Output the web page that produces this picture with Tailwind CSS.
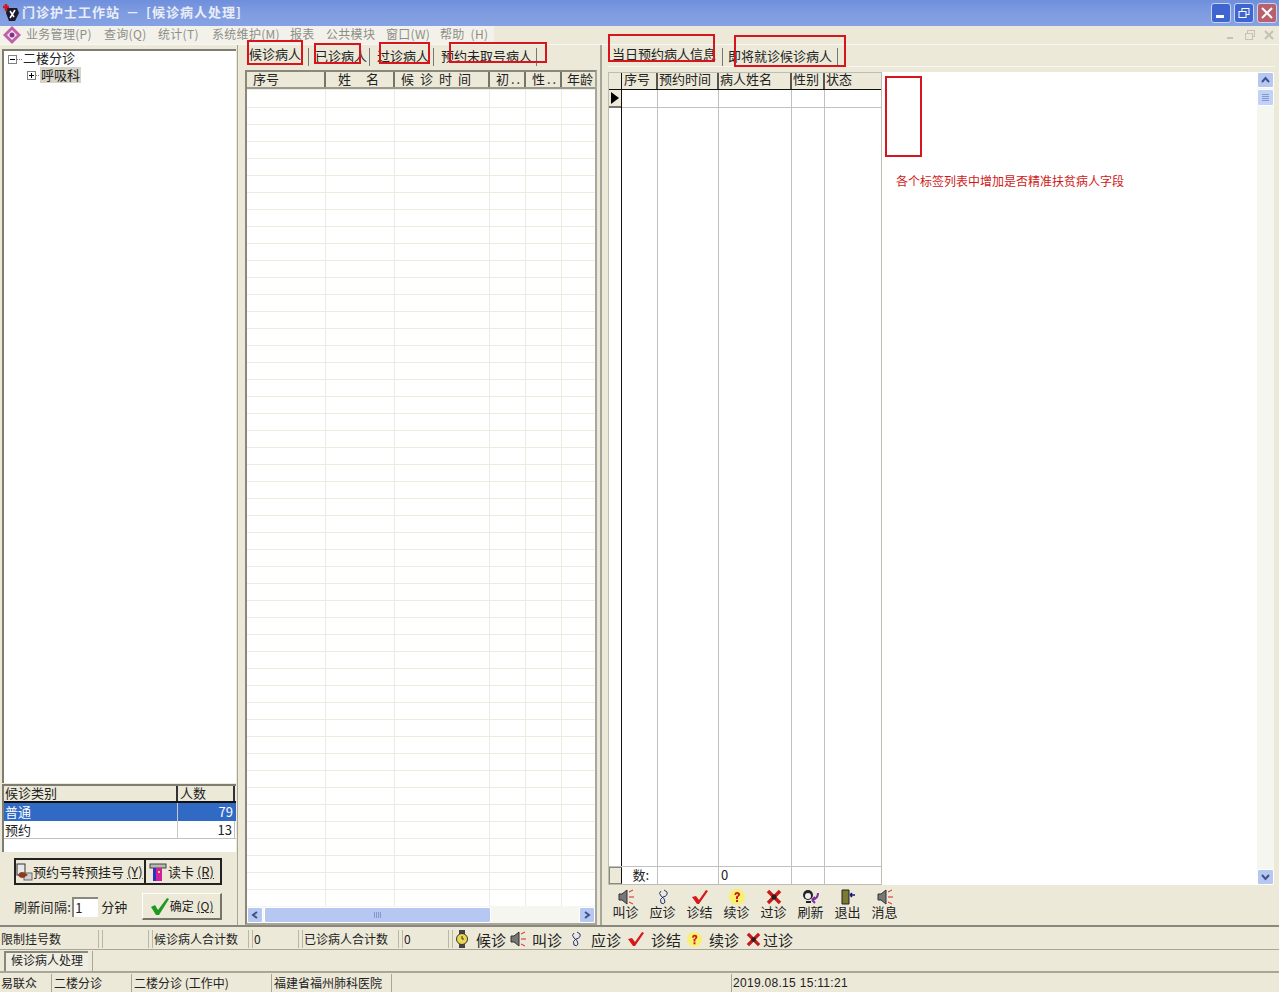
<!DOCTYPE html>
<html lang="zh-CN">
<head>
<meta charset="UTF-8">
<title>门诊护士工作站</title>
<script src="https://cdn.jsdelivr.net/npm/@tailwindcss/browser@4"></script>
</head>
<body class="relative w-[1279px] h-[992px] overflow-hidden bg-[#ece9d8] text-[13px] leading-[16px] text-[#222] font-['Noto_Sans_CJK_SC','Liberation_Sans',sans-serif]">

<!-- Title bar -->
<div class="h-[26px] flex items-center pl-[3px] pr-[2px] bg-gradient-to-b from-[#6f8fdc] via-[#7f9ce0] to-[#86a2e4]">
  <svg width="18" height="20" viewBox="0 0 18 20" class="shrink-0">
    <path d="M4 5 L14 5 L16 10 L12 18 L6 18 L3 10 Z" fill="#1a1a2a"/>
    <path d="M7 8 L11 14 M12 7 L7 15" stroke="#fff" stroke-width="1.5"/>
    <path d="M3 1 V8 M0 4 H6" stroke="#d01818" stroke-width="2.5"/>
  </svg>
  <span class="ml-[1px] -mt-[3px] font-bold text-[#e9edf8] tracking-[1px] whitespace-nowrap">门诊护士工作站</span>
  <span class="ml-[6px] -mt-[3px] font-bold text-[#e9edf8]">－</span>
  <span class="ml-[7px] -mt-[3px] font-bold text-[#e9edf8] tracking-[1px] whitespace-nowrap">[候诊病人处理]</span>
  <div class="ml-auto flex gap-[3px]">
    <div class="w-[20px] h-[20px] rounded-[3px] bg-[#3f66d0] border border-[#c8d4f0] flex items-end p-[4px]"><div class="w-[8px] h-[3px] bg-white"></div></div>
    <div class="w-[20px] h-[20px] rounded-[3px] bg-[#3f66d0] border border-[#c8d4f0] flex items-center justify-center">
      <svg width="12" height="12" viewBox="0 0 12 12" fill="none" stroke="#fff"><rect x="4" y="1.5" width="7" height="6"/><rect x="1" y="4.5" width="7" height="6" fill="#3f66d0"/></svg>
    </div>
    <div class="w-[20px] h-[20px] rounded-[3px] bg-[#b8606e] border border-[#d8d0e0] flex items-center justify-center">
      <svg width="12" height="12" viewBox="0 0 12 12" stroke="#fff" stroke-width="2"><path d="M1 1 L11 11 M11 1 L1 11"/></svg>
    </div>
  </div>
</div>

<!-- Menu bar -->
<div class="h-[19px] flex items-center bg-[#ece9d8] border-b border-[#f7f6f0]">
  <div class="w-[494px] h-[18px] flex items-center bg-[#f3f2ea] text-[12px] leading-[14px] text-[#8e8e88] tracking-[0.3px] whitespace-nowrap">
    <svg width="18" height="18" viewBox="0 0 18 18" class="ml-[3px] shrink-0">
      <path d="M9 0 L18 9 L9 18 L0 9 Z" fill="#c060a8"/>
      <path d="M9 4 L14 9 L9 14 L4 9 Z" fill="#f4e8f4"/>
      <circle cx="9" cy="9" r="2.5" fill="#883088"/>
    </svg>
    <span class="ml-[5px] w-[78px] -mt-[3px]">业务管理(P)</span>
    <span class="w-[54px] -mt-[3px]">查询(Q)</span>
    <span class="w-[54px] -mt-[3px]">统计(T)</span>
    <span class="w-[78px] -mt-[3px]">系统维护(M)</span>
    <span class="w-[36px] -mt-[3px]">报表</span>
    <span class="w-[60px] -mt-[3px]">公共模块</span>
    <span class="w-[54px] -mt-[3px]">窗口(W)</span>
    <span class="-mt-[3px]">帮助 &nbsp;(H)</span>
  </div>
  <div class="ml-auto mr-[4px] flex gap-[7px] text-[#c4c2b6]">
    <svg width="12" height="12" viewBox="0 0 12 12" stroke="currentColor" stroke-width="2"><path d="M2 9 H8"/></svg>
    <svg width="12" height="12" viewBox="0 0 12 12" fill="none" stroke="currentColor"><rect x="3.5" y="1.5" width="7" height="6"/><rect x="1.5" y="4.5" width="7" height="6" fill="#ece9d8"/></svg>
    <svg width="12" height="12" viewBox="0 0 12 12" stroke="currentColor" stroke-width="2"><path d="M2 2 L10 10 M10 2 L2 10"/></svg>
  </div>
</div>

<!-- Main area -->
<div class="h-[882px] flex border-b-2 border-[#8a887c]">

  <!-- Left: tree and category list -->
  <div class="w-[238px] shrink-0 pl-[2px] pr-[1px] pt-[4px] flex flex-col border-r border-[#a8a698]">
    <div class="h-[734px] bg-white border-t-2 border-l-2 border-[#7f7d72] relative">
      <div class="flex items-center h-[16px] pl-[4px]">
        <div class="w-[9px] h-[9px] border border-[#808080] flex items-center justify-center"><div class="w-[5px] h-[1px] bg-black"></div></div>
        <div class="w-[5px] border-t border-dotted border-[#808080]"></div>
        <span class="ml-[1px] -mt-[2px]">二楼分诊</span>
      </div>
      <div class="flex items-center h-[16px] pl-[23px]">
        <div class="relative w-[9px] h-[9px] border border-[#808080] flex items-center justify-center"><div class="w-[5px] h-[1px] bg-black"></div><div class="absolute w-[1px] h-[5px] bg-black"></div></div>
        <div class="w-[3px] border-t border-dotted border-[#808080]"></div>
        <span class="ml-[1px] px-[1px] bg-[#d6d3c6]">呼吸科</span>
      </div>
    </div>
    <div class="h-[68px] mt-[1px] bg-white border-t-2 border-l-2 border-[#7f7d72]">
      <div class="h-[17px] flex bg-[#ece9d8] border-b-2 border-[#111] leading-[14px]">
        <div class="w-[174px] pl-[1px] border-r-2 border-[#333]">候诊类别</div>
        <div class="w-[57px] pl-[2px] border-r-2 border-[#333]">人数</div>
      </div>
      <div class="h-[18px] flex bg-[#316ac5] text-white">
        <div class="w-[174px] pl-[1px] border-r border-[#c8c8c8] leading-[18px]">普通</div>
        <div class="w-[57px] pr-[2px] text-right leading-[18px]">79</div>
      </div>
      <div class="h-[18px] flex border-b border-[#c0c0c0]">
        <div class="w-[174px] pl-[1px] border-r border-[#c8c8c8] leading-[18px]">预约</div>
        <div class="w-[57px] pr-[2px] text-right leading-[18px] border-r border-[#c0c0c0]">13</div>
      </div>
    </div>
    <div class="flex pl-[12px] mt-[6px] h-[27px] leading-[14px]">
      <div class="w-[132px] h-[27px] border-2 border-[#222] bg-[#ece9d8] flex items-center text-[13px]">
        <svg width="17" height="18" viewBox="0 0 17 18" class="shrink-0">
          <rect x="1" y="1" width="8" height="11" fill="#e8e8e8" stroke="#333"/>
          <rect x="8" y="10" width="8" height="7" fill="#d0d0d0" stroke="#666"/>
          <path d="M2 12 Q4 7 9 10 L12 12 L7 15 Q3 15 2 12 Z" fill="#8a3a20"/>
        </svg>
        <span class="whitespace-nowrap">预约号转预挂号 <u>(Y)</u></span>
      </div>
      <div class="w-[76px] h-[27px] border-2 border-[#222] border-l-0 bg-[#ece9d8] flex items-center">
        <svg width="20" height="20" viewBox="0 0 20 20" class="ml-[3px] shrink-0">
          <rect x="1" y="2" width="16" height="4" fill="#b8b8b0" stroke="#444"/>
          <rect x="4" y="6" width="9" height="13" fill="#d020a0"/>
          <rect x="4" y="6" width="3" height="13" fill="#3030c0"/>
          <rect x="9" y="9" width="2" height="2" fill="#f0e040"/>
        </svg>
        <span class="-ml-[1px] whitespace-nowrap">读卡 <u>(R)</u></span>
      </div>
    </div>
    <div class="flex items-center pl-[12px] mt-[8px] h-[27px]">
      <span class="tracking-[0.3px] whitespace-nowrap">刷新间隔:</span>
      <div class="ml-[1px] w-[26px] h-[20px] bg-white border-t-2 border-l-2 border-[#8a887c] leading-[18px] pl-[1px]">1</div>
      <span class="ml-[3px] whitespace-nowrap">分钟</span>
      <div class="ml-[15px] w-[80px] h-[27px] bg-[#ece9d8] border border-[#fff] border-r-[#77756a] border-b-[#77756a] border-r-2 border-b-2 flex items-center justify-center">
        <svg width="20" height="20" viewBox="0 0 20 20"><path d="M1 11 L5 9 L8 14 L17 2 L19 3 L9 19 L6 19 Z" fill="#1f9a1f"/></svg>
        <span class="whitespace-nowrap text-[12px]">确定 <u>(Q)</u></span>
      </div>
    </div>
  </div>

  <!-- Splitter -->
  <div class="w-[7px] shrink-0"></div>

  <!-- Middle: waiting patient grid -->
  <div class="w-[355px] shrink-0 flex flex-col">
    <div class="h-[21px] flex items-end pl-[2px] text-[13px] whitespace-nowrap">
      <div class="h-[21px] w-[61px] pl-[2px] leading-[18px]">候诊病人</div>
      <div class="h-[18px] w-[62px] pl-[6px] leading-[16px] border-l border-r border-[#777]">已诊病人</div>
      <div class="h-[18px] w-[64px] pl-[7px] leading-[16px] border-r border-[#777]">过诊病人</div>
      <div class="h-[18px] w-[103px] pl-[7px] leading-[16px] border-r border-[#777]">预约未取号病人</div>
    </div>
    <div class="h-[855px] mt-[4px] mr-[3px] border-2 border-[#8a887c] border-r-[#a8a698] border-b-[#a8a698] bg-white flex flex-col">
      <div class="h-[17px] shrink-0 flex bg-[#ece9d8] border-b-2 border-[#9c9a8c] leading-[14px] whitespace-nowrap">
        <div class="w-[79px] pl-[6px] border-r-2 border-[#77756a]">序号</div>
        <div class="w-[69px] pl-[12px] border-r-2 border-[#77756a]">姓<span class="ml-[15px]">名</span></div>
        <div class="w-[95px] pl-[6px] border-r-2 border-[#77756a] tracking-[6px]">候诊时间</div>
        <div class="w-[36px] pl-[6px] border-r-2 border-[#77756a] tracking-[2px]">初..</div>
        <div class="w-[36px] pl-[6px] border-r-2 border-[#77756a] tracking-[2px]">性..</div>
        <div class="flex-1 pl-[5px]">年龄</div>
      </div>
      <div class="flex-1 flex bg-[repeating-linear-gradient(to_bottom,#fff_0,#fff_16px,#ecebdf_16px,#ecebdf_17px)] bg-[position:0_2px]">
        <div class="w-[79px] border-r border-[#ecebdf]"></div>
        <div class="w-[69px] border-r border-[#ecebdf]"></div>
        <div class="w-[95px] border-r border-[#ecebdf]"></div>
        <div class="w-[36px] border-r border-[#ecebdf]"></div>
        <div class="w-[36px] border-r border-[#ecebdf]"></div>
        <div class="flex-1"></div>
      </div>
      <!-- Horizontal scrollbar -->
      <div class="h-[17px] shrink-0 flex items-center bg-[#f6f6f0]">
        <div class="w-[16px] h-[16px] rounded-[2px] bg-[#b6c8f2] border border-white flex items-center justify-center">
          <svg width="8" height="8" viewBox="0 0 8 8" fill="none" stroke="#41528a" stroke-width="2"><path d="M6 1 L2 4 L6 7"/></svg>
        </div>
        <div class="w-[227px] h-[16px] ml-[1px] rounded-[2px] bg-[#b6c8f2] border border-white flex items-center justify-center gap-[1px]">
          <div class="w-[1px] h-[6px] bg-[#8398d0]"></div><div class="w-[1px] h-[6px] bg-[#8398d0]"></div><div class="w-[1px] h-[6px] bg-[#8398d0]"></div><div class="w-[1px] h-[6px] bg-[#8398d0]"></div>
        </div>
        <div class="ml-auto w-[16px] h-[16px] rounded-[2px] bg-[#b6c8f2] border border-white flex items-center justify-center">
          <svg width="8" height="8" viewBox="0 0 8 8" fill="none" stroke="#41528a" stroke-width="2"><path d="M2 1 L6 4 L2 7"/></svg>
        </div>
      </div>
    </div>
  </div>

  <!-- Splitter -->
  <div class="w-[8px] shrink-0 border-l-2 border-[#a8a698]"></div>

  <!-- Right: appointment grid and memo -->
  <div class="flex-1 flex flex-col">
    <div class="h-[21px] flex items-end text-[13px] whitespace-nowrap">
      <div class="h-[21px] w-[114px] pl-[4px] leading-[18px]">当日预约病人信息</div>
      <div class="h-[18px] w-[116px] pl-[5px] leading-[16px] border-l border-r border-[#777]">即将就诊候诊病人</div>
    </div>
    <div class="h-[820px] mr-[4px] pt-[5px] flex border-t border-[#f7f6f0]">
      <div class="w-[274px] h-[813px] flex flex-col border border-[#bdbdb4] bg-white">
        <div class="h-[17px] shrink-0 flex bg-[#ece9d8] border-b border-[#111] leading-[12px] whitespace-nowrap">
          <div class="w-[13px] border-r border-[#111]"></div>
          <div class="w-[36px] pl-[2px] border-r-2 border-[#555]">序号</div>
          <div class="w-[61px] pl-[1px] border-r-2 border-[#555]">预约时间</div>
          <div class="w-[73px] pl-[1px] border-r-2 border-[#555]">病人姓名</div>
          <div class="w-[33px] pl-[1px] border-r-2 border-[#555]">性别</div>
          <div class="flex-1 pl-[1px]">状态</div>
        </div>
        <div class="flex-1 flex">
          <div class="w-[13px] border-r border-[#111] flex flex-col">
            <div class="h-[18px] bg-[#ece9d8] border-b-2 border-[#77756a] flex items-center pl-[2px]">
              <svg width="8" height="12" viewBox="0 0 8 12"><path d="M0 0 L8 6 L0 12 Z" fill="#000"/></svg>
            </div>
          </div>
          <div class="w-[36px] border-r border-[#c0c0c0]"><div class="h-[18px] border-b border-[#c0c0c0]"></div></div>
          <div class="w-[61px] border-r border-[#c0c0c0]"><div class="h-[18px] border-b border-[#c0c0c0]"></div></div>
          <div class="w-[73px] border-r border-[#c0c0c0]"><div class="h-[18px] border-b border-[#c0c0c0]"></div></div>
          <div class="w-[33px] border-r border-[#c0c0c0]"><div class="h-[18px] border-b border-[#c0c0c0]"></div></div>
          <div class="flex-1"><div class="h-[18px] border-b border-[#c0c0c0]"></div></div>
        </div>
        <div class="h-[18px] flex border-t border-[#c0c0c0] leading-[15px]">
          <div class="w-[13px] bg-[#ece9d8] border border-[#8a887c] border-r-[#111]"></div>
          <div class="w-[36px] border-r border-[#c0c0c0] whitespace-nowrap flex justify-end pr-[8px]">数:</div>
          <div class="w-[61px] border-r border-[#c0c0c0]"></div>
          <div class="w-[73px] pl-[2px] border-r border-[#c0c0c0]">0</div>
          <div class="w-[33px] border-r border-[#c0c0c0]"></div>
        </div>
      </div>
      <div class="w-[392px] h-[813px] bg-white flex">
        <div class="flex-1 pl-[14px] pt-[101px] text-[12px] text-[#d01818] whitespace-nowrap">各个标签列表中增加是否精准扶贫病人字段</div>
        <div class="w-[17px] bg-[#f6f6f0] flex flex-col justify-between">
          <div>
            <div class="h-[16px] rounded-[2px] bg-[#b6c8f2] border border-white flex items-center justify-center">
              <svg width="9" height="8" viewBox="0 0 9 8" fill="none" stroke="#41528a" stroke-width="2"><path d="M1 6 L4.5 2 L8 6"/></svg>
            </div>
            <div class="h-[17px] mt-[1px] rounded-[2px] bg-[#c2d2f6] border border-white flex flex-col items-center justify-center gap-[1px]">
              <div class="w-[7px] h-[1px] bg-[#8398d0]"></div><div class="w-[7px] h-[1px] bg-[#8398d0]"></div><div class="w-[7px] h-[1px] bg-[#8398d0]"></div><div class="w-[7px] h-[1px] bg-[#8398d0]"></div>
            </div>
          </div>
          <div class="h-[16px] rounded-[2px] bg-[#b6c8f2] border border-white flex items-center justify-center">
            <svg width="9" height="8" viewBox="0 0 9 8" fill="none" stroke="#41528a" stroke-width="2"><path d="M1 2 L4.5 6 L8 2"/></svg>
          </div>
        </div>
      </div>
    </div>
    <!-- Action toolbar -->
    <div class="flex mt-[3px] -ml-[1px] text-[13px] leading-[14px] text-center whitespace-nowrap">
      <div class="w-[37px] flex flex-col items-center">
        <svg width="20" height="16" viewBox="0 0 20 16"><path d="M3 5 H6 L11 1 V15 L6 11 H3 Z" fill="#777" stroke="#333"/><path d="M13 3 L17 1 M13 8 H18 M13 13 L17 15" stroke="#e02020"/></svg>
        <span>叫诊</span>
      </div>
      <div class="w-[37px] flex flex-col items-center">
        <svg width="16" height="16" viewBox="0 0 16 16" fill="none" stroke="#223080"><path d="M9 1 L12 3 Q13 7 8 8 Q4 10 6 14 Q9 16 10 13 Q10 9 6 7 Q3 4 6 2"/></svg>
        <span>应诊</span>
      </div>
      <div class="w-[37px] flex flex-col items-center">
        <svg width="18" height="16" viewBox="0 0 18 16"><path d="M1 8 L5 7 L8 11 L15 1 L17 2 L8 15 L6 15 Z" fill="#d81818"/></svg>
        <span>诊结</span>
      </div>
      <div class="w-[37px] flex flex-col items-center">
        <svg width="16" height="16" viewBox="0 0 16 16"><circle cx="8" cy="8" r="8" fill="#f8f070"/><path d="M5.5 6 Q5.5 3 8 3 Q11 3 11 5.5 Q11 7 9 8 L9 10 H7 L7 7.5 Q9 7 9 5.5 Q9 4.7 8 4.7 Q7.2 4.7 7.2 6 Z M7 11 H9 V13 H7 Z" fill="#d01818"/></svg>
        <span>续诊</span>
      </div>
      <div class="w-[37px] flex flex-col items-center">
        <svg width="16" height="16" viewBox="0 0 16 16"><path d="M2 2 L14 14 M14 2 L2 14" stroke="#c81818" stroke-width="3.5"/><circle cx="8" cy="8" r="2.5" fill="#222"/></svg>
        <span>过诊</span>
      </div>
      <div class="w-[37px] flex flex-col items-center">
        <svg width="18" height="16" viewBox="0 0 18 16"><circle cx="6" cy="6" r="5" fill="#222"/><circle cx="6" cy="7" r="3" fill="#eee"/><path d="M4 13 H9" stroke="#222" stroke-width="2"/><path d="M16 4 Q16 10 10 11 M10 11 L13 8 M10 11 L13 14" fill="none" stroke="#8030a0" stroke-width="2"/></svg>
        <span>刷新</span>
      </div>
      <div class="w-[37px] flex flex-col items-center">
        <svg width="16" height="16" viewBox="0 0 16 16"><path d="M2 1 H9 V15 H2 Z" fill="#7a7a30" stroke="#222"/><path d="M10 6 H15 M10 6 L12 4 M10 6 L12 8" stroke="#101080" stroke-width="1.5"/></svg>
        <span>退出</span>
      </div>
      <div class="w-[37px] flex flex-col items-center">
        <svg width="20" height="16" viewBox="0 0 20 16"><path d="M3 5 H6 L11 1 V15 L6 11 H3 Z" fill="#777" stroke="#333"/><path d="M13 3 L17 1 M13 8 H18 M13 13 L17 15" stroke="#e02020"/></svg>
        <span>消息</span>
      </div>
    </div>
  </div>
</div>

<!-- Summary row -->
<div class="h-[23px] pt-[2px] flex items-center border-b border-[#a8a698] text-[12px] leading-[17px] whitespace-nowrap">
  <div class="w-[99px] h-[18px] mr-[3px] pl-[1px] border-r border-[#bab7a6]">限制挂号数</div>
  <div class="w-[47px] h-[18px] mr-[3px] border-x border-[#bab7a6]"></div>
  <div class="w-[97px] h-[18px] mr-[3px] pl-[1px] border-x border-[#bab7a6]">候诊病人合计数</div>
  <div class="w-[47px] h-[18px] mr-[3px] pl-[1px] border-x border-[#bab7a6]">0</div>
  <div class="w-[97px] h-[18px] mr-[3px] pl-[1px] border-x border-[#bab7a6]">已诊病人合计数</div>
  <div class="w-[47px] h-[18px] mr-[3px] pl-[1px] border-x border-[#bab7a6]">0</div>
  <div class="h-[18px] flex items-center border-l border-[#bab7a6] pl-[1px] text-[15px]">
    <svg width="16" height="18" viewBox="0 0 16 18"><rect x="5" y="0" width="6" height="18" fill="#444"/><circle cx="8" cy="9" r="5.5" fill="#e8d850" stroke="#333"/><path d="M8 6 V9 H10" stroke="#333" fill="none"/></svg>
    <span class="ml-[6px]">候诊</span>
    <svg width="20" height="16" viewBox="0 0 20 16" class="ml-[2px]"><path d="M3 5 H6 L11 1 V15 L6 11 H3 Z" fill="#777" stroke="#333"/><path d="M13 3 L17 1 M13 8 H18 M13 13 L17 15" stroke="#e02020"/></svg>
    <span class="ml-[4px]">叫诊</span>
    <svg width="16" height="16" viewBox="0 0 16 16" fill="none" stroke="#223080" class="ml-[6px]"><path d="M9 1 L12 3 Q13 7 8 8 Q4 10 6 14 Q9 16 10 13 Q10 9 6 7 Q3 4 6 2"/></svg>
    <span class="ml-[7px]">应诊</span>
    <svg width="18" height="16" viewBox="0 0 18 16" class="ml-[6px]"><path d="M1 8 L5 7 L8 11 L15 1 L17 2 L8 15 L6 15 Z" fill="#d81818"/></svg>
    <span class="ml-[6px]">诊结</span>
    <svg width="15" height="15" viewBox="0 0 16 16" class="ml-[6px]"><circle cx="8" cy="8" r="8" fill="#f8f070"/><path d="M5.5 6 Q5.5 3 8 3 Q11 3 11 5.5 Q11 7 9 8 L9 10 H7 L7 7.5 Q9 7 9 5.5 Q9 4.7 8 4.7 Q7.2 4.7 7.2 6 Z M7 11 H9 V13 H7 Z" fill="#d01818"/></svg>
    <span class="ml-[7px]">续诊</span>
    <svg width="15" height="15" viewBox="0 0 16 16" class="ml-[7px]"><path d="M2 2 L14 14 M14 2 L2 14" stroke="#c81818" stroke-width="3.5"/><circle cx="8" cy="8" r="2.5" fill="#222"/></svg>
    <span class="ml-[2px]">过诊</span>
  </div>
</div>

<!-- Window tab strip -->
<div class="h-[23px] flex items-center border-b-2 border-[#a8a698] pl-[4px]">
  <div class="w-[84px] h-[20px] pl-[5px] bg-[#f0eee3] border-t-2 border-l-2 border-[#8a887c] leading-[14px] text-[12px]">候诊病人处理</div>
  <div class="ml-[4px] h-[20px] border-l border-[#a8a698]"></div>
</div>

<!-- Status bar -->
<div class="h-[18px] mt-[1px] flex items-center text-[12px] leading-[18px] whitespace-nowrap">
  <div class="w-[51px] h-[18px] pl-[1px]">易联众</div>
  <div class="w-[80px] h-[18px] pl-[2px] border-l border-[#a8a698]">二楼分诊</div>
  <div class="w-[140px] h-[18px] pl-[2px] border-l border-[#a8a698]">二楼分诊 (工作中)</div>
  <div class="w-[120px] h-[18px] pl-[2px] border-l border-[#a8a698]">福建省福州肺科医院</div>
  <div class="w-[340px] h-[18px] border-l border-[#a8a698]"></div>
  <div class="h-[18px] pl-[1px] border-l border-[#a8a698] font-['Liberation_Sans'] tracking-[0.3px]">2019.08.15 15:11:21</div>
</div>

<!-- Red review annotations drawn over the screenshot -->
<div class="absolute left-[247px] top-[40px] w-[56px] h-[25px] border-2 border-[#d8141c]"></div>
<div class="absolute left-[314px] top-[43px] w-[47px] h-[21px] border-2 border-[#d8141c]"></div>
<div class="absolute left-[379px] top-[42px] w-[51px] h-[22px] border-2 border-[#d8141c]"></div>
<div class="absolute left-[449px] top-[42px] w-[98px] h-[21px] border-2 border-[#d8141c]"></div>
<div class="absolute left-[608px] top-[34px] w-[107px] h-[28px] border-2 border-[#d8141c]"></div>
<div class="absolute left-[734px] top-[35px] w-[112px] h-[32px] border-2 border-[#d8141c]"></div>
<div class="absolute left-[885px] top-[76px] w-[37px] h-[81px] border-2 border-[#d8141c]"></div>

</body>
</html>
